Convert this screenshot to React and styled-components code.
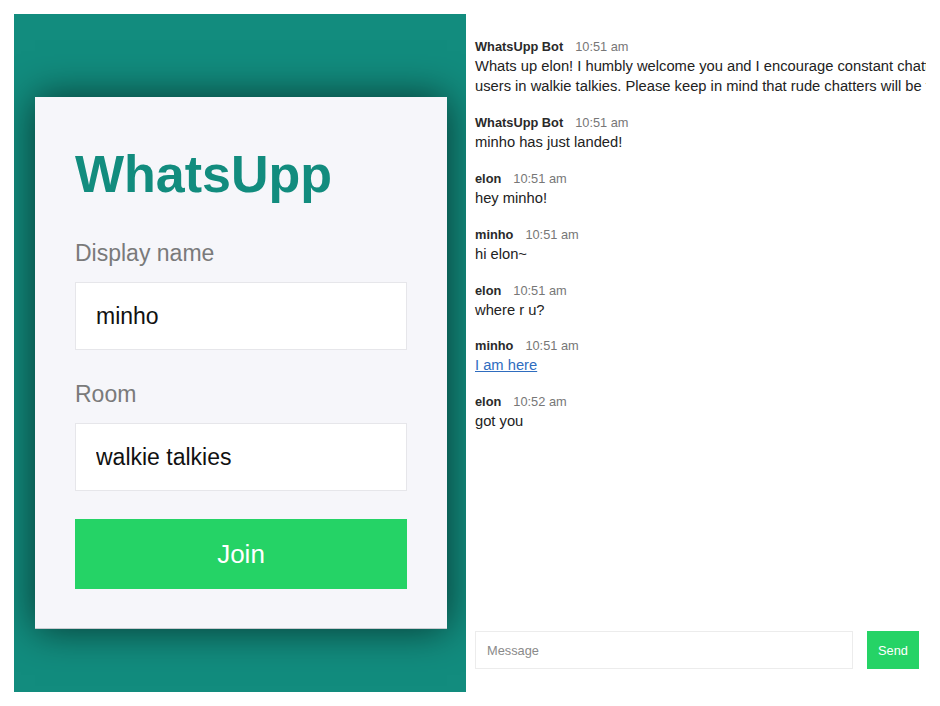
import React from "react";
import styled, { createGlobalStyle } from "styled-components";

const Global = createGlobalStyle`
  html, body { margin: 0; padding: 0; background: #fff; }
  body { font-family: "Liberation Sans", Arial, sans-serif; }
  * { box-sizing: border-box; }
`;

const Page = styled.div`
  display: flex;
  height: 100vh;
  padding: 14px;
`;

const JoinPanel = styled.section`
  width: 452px;
  flex: none;
  background: #128c7e;
  display: flex;
  align-items: flex-start;
  padding: 83px 0 0 21px;
  overflow: hidden;
`;

const Card = styled.form`
  width: 412px;
  background: #f6f6fa;
  padding: 40px 40px 39px;
  display: flex;
  flex-direction: column;
  box-shadow: 0 0 38px rgba(0, 0, 0, 0.62);
  border-bottom: 1px solid #c9cbd0;
`;

const Title = styled.h1`
  margin: 7px 0 36px;
  font-size: 52px;
  line-height: 60px;
  font-weight: 700;
  color: #128c7e;
`;

const Label = styled.label`
  display: block;
  font-size: 23px;
  line-height: 26px;
  color: #7a7a7a;
  margin-bottom: 16px;
`;

const Field = styled.div`
  display: flex;
  flex-direction: column;
  margin-bottom: ${(p) => p.$gap}px;
`;

const TextInput = styled.input`
  height: 68px;
  width: 100%;
  border: 1px solid #e6e6ea;
  background: #fff;
  padding: 0 20px;
  font-family: inherit;
  font-size: 23px;
  color: #111;
  outline: none;
`;

const JoinButton = styled.button`
  height: 70px;
  width: 100%;
  border: none;
  background: #25d366;
  color: #fff;
  font-family: inherit;
  font-size: 26px;
  cursor: pointer;
`;

const ChatPane = styled.section`
  flex: 1;
  min-width: 0;
  overflow: hidden;
  display: flex;
  flex-direction: column;
  padding: 0 7px 23px 9px;
`;

const MessageList = styled.div`
  flex: 1;
  width: 560px;
  padding-top: 23px;
`;

const Message = styled.div`
  margin-bottom: 16px;
`;

const Meta = styled.div`
  font-size: 12.8px;
  line-height: 20px;
`;

const Author = styled.span`
  font-weight: 700;
  color: #2a2a2a;
`;

const Time = styled.span`
  color: #777;
  margin-left: 12px;
`;

const Text = styled.p`
  margin: 0;
  font-size: 14.72px;
  line-height: 19.9px;
  color: #222;
`;

const Link = styled.a`
  color: #2f6dbf;
  text-decoration: underline;
`;

const Compose = styled.form`
  display: flex;
  gap: 14px;
  width: 444px;
`;

const MessageInput = styled.input`
  flex: 1;
  height: 38px;
  border: 1px solid #ececec;
  background: #fff;
  padding: 0 11px;
  font-family: inherit;
  font-size: 12.8px;
  color: #111;
  outline: none;
  &::placeholder { color: #8a8a8a; }
`;

const SendButton = styled.button`
  width: 52px;
  height: 38px;
  border: none;
  background: #25d366;
  color: #fff;
  font-family: inherit;
  font-size: 12.8px;
  padding: 0;
`;

const messages = [
  {
    author: "WhatsUpp Bot",
    time: "10:51 am",
    text: "Whats up elon! I humbly welcome you and I encourage constant chatting with other users in walkie talkies. Please keep in mind that rude chatters will be flagged.",
  },
  { author: "WhatsUpp Bot", time: "10:51 am", text: "minho has just landed!" },
  { author: "elon", time: "10:51 am", text: "hey minho!" },
  { author: "minho", time: "10:51 am", text: "hi elon~" },
  { author: "elon", time: "10:51 am", text: "where r u?" },
  { author: "minho", time: "10:51 am", text: "I am here", link: true },
  { author: "elon", time: "10:52 am", text: "got you" },
];

export default function App() {
  return (
    <>
      <Global />
      <Page>
        <JoinPanel>
          <Card onSubmit={(e) => e.preventDefault()}>
            <Title>WhatsUpp</Title>
            <Field $gap={31}>
              <Label htmlFor="name">Display name</Label>
              <TextInput id="name" defaultValue="minho" />
            </Field>
            <Field $gap={28}>
              <Label htmlFor="room">Room</Label>
              <TextInput id="room" defaultValue="walkie talkies" />
            </Field>
            <JoinButton type="submit">Join</JoinButton>
          </Card>
        </JoinPanel>
        <ChatPane>
          <MessageList>
            {messages.map((m, i) => (
              <Message key={i}>
                <Meta>
                  <Author>{m.author}</Author>
                  <Time>{m.time}</Time>
                </Meta>
                <Text>
                  {m.link ? <Link href="#">{m.text}</Link> : m.text}
                </Text>
              </Message>
            ))}
          </MessageList>
          <Compose onSubmit={(e) => e.preventDefault()}>
            <MessageInput placeholder="Message" autoFocus />
            <SendButton type="submit">Send</SendButton>
          </Compose>
        </ChatPane>
      </Page>
    </>
  );
}
